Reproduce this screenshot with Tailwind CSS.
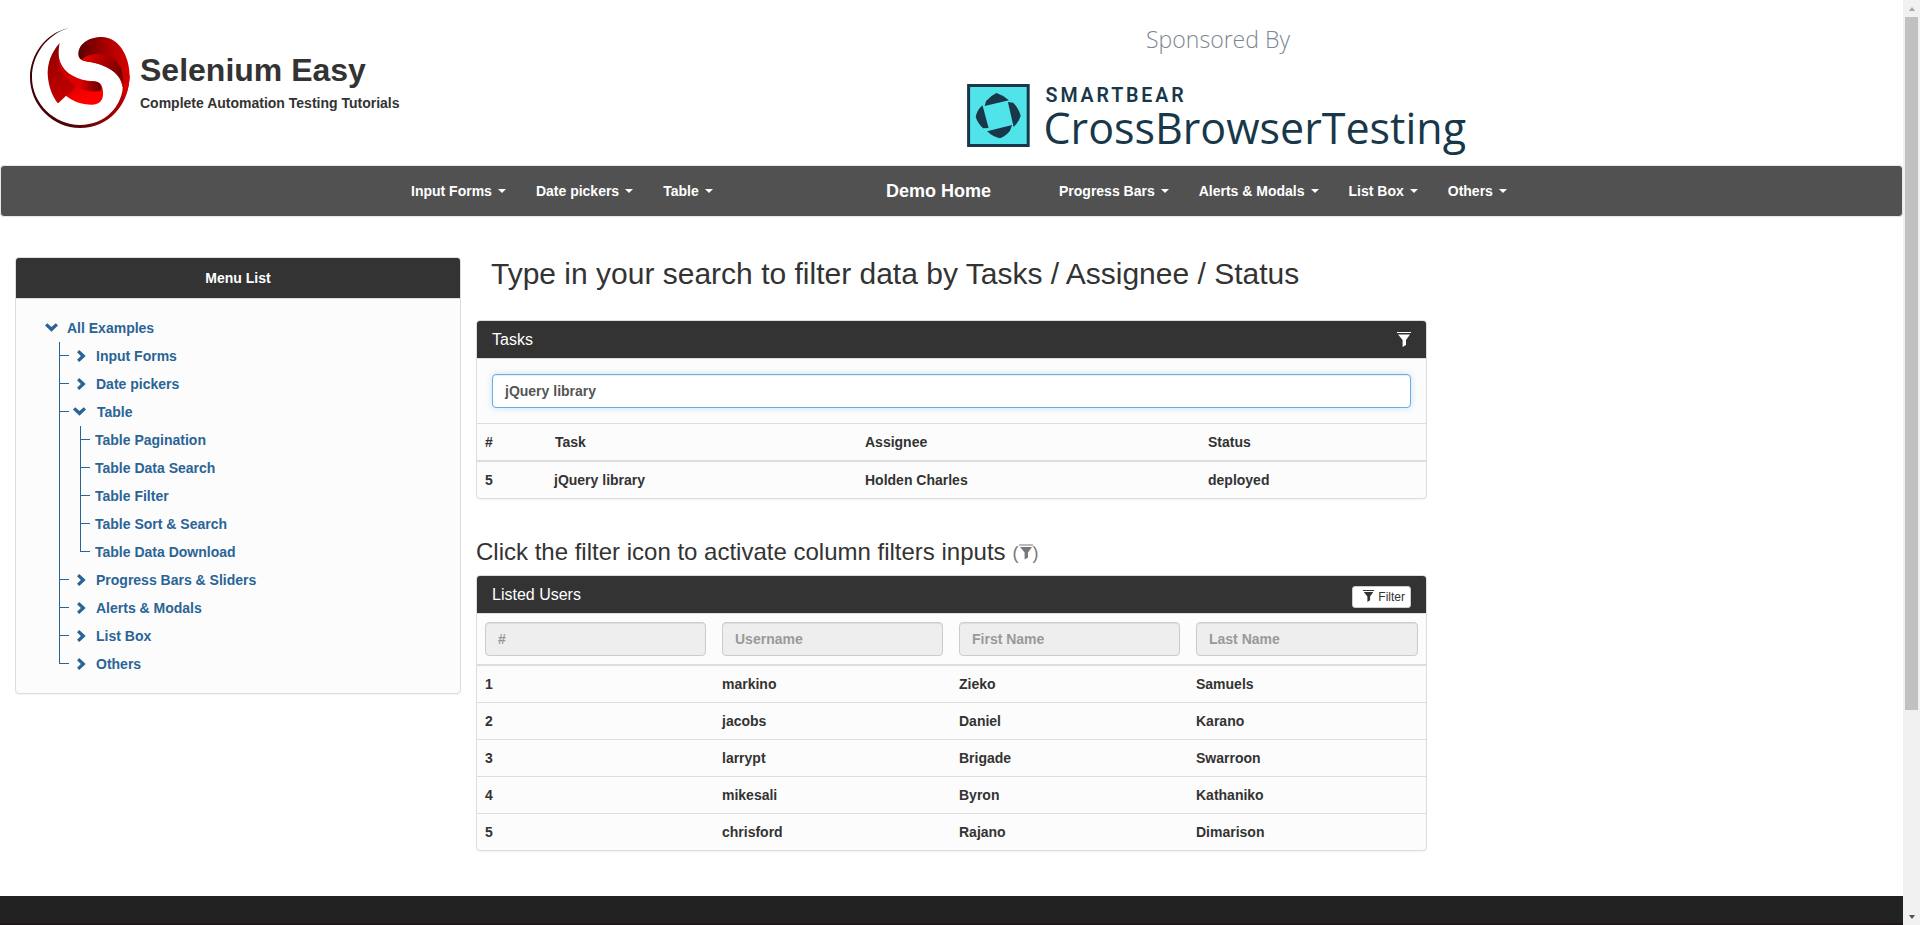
<!DOCTYPE html>
<html lang="en">
<head>
<meta charset="utf-8">
<title>Selenium Easy - Table Data Search</title>
<script src="https://cdn.jsdelivr.net/npm/@tailwindcss/browser@4"></script>
</head>
<body class="h-[925px] overflow-hidden bg-white font-['Liberation_Sans',Arial,sans-serif] text-sm leading-5 font-bold text-[#333]">
<svg class="hidden">
  <symbol id="filter" viewBox="0 0 14 15"><path d="M0 0H14V1H0zM1 2.4H13L9 8V13L5.6 15V8z" fill="currentColor"/></symbol>
  <symbol id="right" viewBox="0 0 9 12"><path d="M0 2.2 2.2 0 8.7 6 2.2 12 0 9.8 3.9 6z" fill="currentColor"/></symbol>
  <symbol id="down" viewBox="0 0 13 9"><path d="M0 2.4 2.2 .2 6.5 4 10.8 .2 13 2.4 6.5 8.7z" fill="currentColor"/></symbol>
</svg>
<div class="flex h-full">
<div class="flex h-full w-[1903px] flex-col">
  <header class="flex h-[165px] shrink-0">
    <div class="flex w-[967px] pt-7 pl-[30px]">
      <svg class="size-[100px] shrink-0" viewBox="90 84 300 300">
        <defs>
          <linearGradient id="g1" x1="0" x2="1"><stop offset="0" stop-color="#5a0000"/><stop offset=".6" stop-color="#b00000"/><stop offset="1" stop-color="#d80000"/></linearGradient>
          <linearGradient id="g2" x1="0" y1="0" x2="1" y2=".3"><stop offset="0" stop-color="#f00000"/><stop offset="1" stop-color="#7a0000"/></linearGradient>
          <linearGradient id="g3" x1="0" y1="0" x2=".5" y2="1"><stop offset="0" stop-color="#7a0000"/><stop offset="1" stop-color="#ff0000"/></linearGradient>
          <linearGradient id="g4" x1="0" x2="1"><stop offset="0" stop-color="#400006"/><stop offset=".5" stop-color="#5a0408"/><stop offset="1" stop-color="#c00000"/></linearGradient>
          <linearGradient id="g5" x1="0" x2="1"><stop offset="0" stop-color="#d00000"/><stop offset=".5" stop-color="#e00000"/><stop offset="1" stop-color="#600000"/></linearGradient>
        </defs>
        <path d="M206 84C135 100 90 165 90 232C90 316 158 384 240 384C325 384 389 315 389 225L370 250C368 320 315 375 240 375C164 375 96 312 96 232C96 165 140 104 206 84Z" fill="url(#g4)"/>
        <path d="M235 162C236 130 268 111 305 111C358 112 390 170 389 232C386 262 380 285 368 300C372 262 366 240 345 218C325 200 290 187 258 184C243 181 235 175 235 162Z" fill="url(#g1)"/>
        <path d="M244 180C260 160 300 155 335 172C358 186 370 208 370 252C360 222 320 192 262 185Z" fill="url(#g2)"/>
        <path d="M179 129C152 160 143 190 143 222C145 260 156 287 174 310L198 287C215 302 245 314 275 314C300 313 311 300 309 275C308 252 297 244 280 244C235 241 194 222 180 185C174 165 176 145 179 129Z" fill="url(#g3)"/>
        <path d="M176 170C184 225 225 242 280 244C300 245 307 260 303 272C280 278 245 272 225 258C195 240 172 215 176 170Z" fill="url(#g5)"/>
        <path d="M144 215C146 255 158 290 174 310L198 287C215 278 222 268 224 258C195 235 180 215 172 175Z" fill="#a00000" opacity=".55"/>
      </svg>
      <div class="pl-[10px] pt-6">
        <h1 class="text-[32px] leading-9">Selenium Easy</h1>
        <p class="pt-[5px]">Complete Automation Testing Tutorials</p>
      </div>
    </div>
    <svg class="mt-5 h-[140px] w-[505px] overflow-visible font-normal" viewBox="27 20 505 140" font-family="Open Sans, sans-serif">
      <text x="206" y="48" font-size="24" font-weight="300" fill="#7b8794" textLength="144" lengthAdjust="spacingAndGlyphs">Sponsored By</text>
      <rect x="28.6" y="85.5" width="59.6" height="60" fill="#50e3ea" stroke="#18384a" stroke-width="3"/>
      <path d="M44.6 106 46.1 101Q51 95.5 56.4 93Q63 95 68.9 100.3zM67.9 102 73.2 102.7Q78.5 108 80.7 115.7Q79 122 73.6 127zM47.1 131.3 72.1 125 70 130.7Q66 136 60 138.3Q53 137 47.1 131.3zM42.5 105.3 48.6 128 43.2 128.3Q38 124 35.7 117Q37 110 42.5 105.3z" fill="#18384a"/>
      <text x="105.6" y="102" font-size="19.6" font-weight="600" fill="#18384a" textLength="138" lengthAdjust="spacing" font-family="Roboto, sans-serif">SMARTBEAR</text>
      <text x="103.5" y="144" font-size="44" fill="#18384a" textLength="422.5" lengthAdjust="spacingAndGlyphs">CrossBrowserTesting</text>
    </svg>
  </header>

  <nav class="flex h-[52px] shrink-0 items-center rounded border border-[#e7e7e7] bg-[#515151] pb-px text-white">
    <div class="flex w-[885px] pl-[395px]">
      <a class="flex items-center px-[15px]">Input Forms<i class="ml-[6px] border-x-4 border-t-4 border-x-transparent border-t-white"></i></a>
      <a class="flex items-center px-[15px]">Date pickers<i class="ml-[6px] border-x-4 border-t-4 border-x-transparent border-t-white"></i></a>
      <a class="flex items-center px-[15px]">Table<i class="ml-[6px] border-x-4 border-t-4 border-x-transparent border-t-white"></i></a>
    </div>
    <a class="w-[158px] text-lg leading-5">Demo Home</a>
    <div class="flex">
      <a class="flex items-center px-[15px]">Progress Bars<i class="ml-[6px] border-x-4 border-t-4 border-x-transparent border-t-white"></i></a>
      <a class="flex items-center px-[15px]">Alerts &amp; Modals<i class="ml-[6px] border-x-4 border-t-4 border-x-transparent border-t-white"></i></a>
      <a class="flex items-center px-[15px]">List Box<i class="ml-[6px] border-x-4 border-t-4 border-x-transparent border-t-white"></i></a>
      <a class="flex items-center px-[15px]">Others<i class="ml-[6px] border-x-4 border-t-4 border-x-transparent border-t-white"></i></a>
    </div>
  </nav>

  <main class="flex flex-1 items-start pl-[15px]">
    <aside class="mt-10 h-[437px] w-[446px] rounded border border-[#ddd] bg-[#fcfcfc] shadow-[0_1px_1px_rgba(0,0,0,.05)]">
      <div class="flex h-[41px] items-center justify-center rounded-t-[3px] border-b border-[#ddd] bg-[#333] text-white">Menu List</div>
      <div class="pt-[15px] pl-[29px] text-[#2a6496]">
        <div class="flex h-7 items-center"><svg class="mb-0.5 mr-[9px] h-[9px] w-[13px]"><use href="#down"/></svg>All Examples</div>
        <ul class="pl-[14px]">
          <li class="flex"><span class="mr-[8px] h-7 w-[10px] border-l border-[#2a6496]"><i class="mt-[13px] block h-px bg-[#2a6496]"></i></span><span class="flex h-7 items-center"><svg class="mr-[10px] h-3 w-[9px]"><use href="#right"/></svg>Input Forms</span></li>
          <li class="flex"><span class="mr-[8px] h-7 w-[10px] border-l border-[#2a6496]"><i class="mt-[13px] block h-px bg-[#2a6496]"></i></span><span class="flex h-7 items-center"><svg class="mr-[10px] h-3 w-[9px]"><use href="#right"/></svg>Date pickers</span></li>
          <li>
            <div class="flex"><span class="mr-[4px] h-7 w-[10px] border-l border-[#2a6496]"><i class="mt-[13px] block h-px bg-[#2a6496]"></i></span><span class="flex h-7 items-center"><svg class="mb-0.5 mr-[11px] h-[9px] w-[13px]"><use href="#down"/></svg>Table</span></div>
            <ul class="border-l border-[#2a6496] pl-[20px]">
              <li class="flex"><span class="mr-[5px] h-7 w-[10px] border-l border-[#2a6496]"><i class="mt-[13px] block h-px bg-[#2a6496]"></i></span><span class="flex h-7 items-center">Table Pagination</span></li>
              <li class="flex"><span class="mr-[5px] h-7 w-[10px] border-l border-[#2a6496]"><i class="mt-[13px] block h-px bg-[#2a6496]"></i></span><span class="flex h-7 items-center">Table Data Search</span></li>
              <li class="flex"><span class="mr-[5px] h-7 w-[10px] border-l border-[#2a6496]"><i class="mt-[13px] block h-px bg-[#2a6496]"></i></span><span class="flex h-7 items-center">Table Filter</span></li>
              <li class="flex"><span class="mr-[5px] h-7 w-[10px] border-l border-[#2a6496]"><i class="mt-[13px] block h-px bg-[#2a6496]"></i></span><span class="flex h-7 items-center">Table Sort &amp; Search</span></li>
              <li class="flex"><span class="mr-[5px] h-[14px] w-[10px] border-b border-l border-[#2a6496]"></span><span class="flex h-7 items-center">Table Data Download</span></li>
            </ul>
          </li>
          <li class="flex"><span class="mr-[8px] h-7 w-[10px] border-l border-[#2a6496]"><i class="mt-[13px] block h-px bg-[#2a6496]"></i></span><span class="flex h-7 items-center"><svg class="mr-[10px] h-3 w-[9px]"><use href="#right"/></svg>Progress Bars &amp; Sliders</span></li>
          <li class="flex"><span class="mr-[8px] h-7 w-[10px] border-l border-[#2a6496]"><i class="mt-[13px] block h-px bg-[#2a6496]"></i></span><span class="flex h-7 items-center"><svg class="mr-[10px] h-3 w-[9px]"><use href="#right"/></svg>Alerts &amp; Modals</span></li>
          <li class="flex"><span class="mr-[8px] h-7 w-[10px] border-l border-[#2a6496]"><i class="mt-[13px] block h-px bg-[#2a6496]"></i></span><span class="flex h-7 items-center"><svg class="mr-[10px] h-3 w-[9px]"><use href="#right"/></svg>List Box</span></li>
          <li class="flex"><span class="mr-[8px] h-[14px] w-[10px] border-b border-l border-[#2a6496]"></span><span class="flex h-7 items-center"><svg class="mr-[10px] h-3 w-[9px]"><use href="#right"/></svg>Others</span></li>
        </ul>
      </div>
    </aside>

    <div class="ml-[15px] w-[951px]">
      <h2 class="mt-10 h-[63px] pl-[15px] text-[30px] leading-[33px] font-normal">Type in your search to filter data by Tasks / Assignee / Status</h2>
      <section class="rounded border border-[#ddd] bg-[#fcfcfc] shadow-[0_1px_1px_rgba(0,0,0,.05)]">
        <div class="flex h-[38px] items-center justify-between rounded-t-[3px] border-b border-[#ddd] bg-[#333] px-[15px] text-base leading-[18px] font-normal text-white">Tasks<svg class="h-[15px] w-[14px]"><use href="#filter"/></svg></div>
        <div class="p-[15px]"><div class="flex h-[34px] items-center rounded border border-[#66afe9] bg-white px-3 text-[#555] shadow-[inset_0_1px_1px_rgba(0,0,0,.075),0_0_6px_rgba(102,175,233,.35)]">jQuery library</div></div>
        <div class="grid h-[39px] grid-cols-[70px_310px_343px_auto] items-center border-t border-b-2 border-[#ddd] pl-2"><span>#</span><span>Task</span><span>Assignee</span><span>Status</span></div>
        <div class="grid h-9 grid-cols-[69px_311px_343px_auto] items-center pl-2"><span>5</span><span>jQuery library</span><span>Holden Charles</span><span>deployed</span></div>
      </section>
      <h3 class="flex h-[76px] items-center pt-[30px] text-2xl leading-[26px] font-normal">Click the filter icon to activate column filters inputs<span class="ml-[7px] flex items-center pt-[2px] text-lg text-[#777]">(<svg class="mb-[3px] h-[16px] w-[14px]"><use href="#filter"/></svg>)</span></h3>
      <section class="rounded border border-[#ddd] bg-[#fcfcfc] shadow-[0_1px_1px_rgba(0,0,0,.05)]">
        <div class="flex h-[38px] items-center justify-between rounded-t-[3px] border-b border-[#ddd] bg-[#333] px-[15px] text-base leading-[18px] font-normal text-white">Listed Users
          <span class="mt-[5px] flex h-[22px] w-[59px] items-center justify-end rounded-[3px] border border-[#ccc] bg-white pr-[5px] text-xs text-[#333]"><svg class="mr-[4px] mb-[2px] h-[12px] w-[11px]"><use href="#filter"/></svg>Filter</span></div>
        <div class="grid h-[52px] grid-cols-[237px_237px_237px_auto] items-center border-b-2 border-[#ddd] text-[#999]">
          <div class="px-2"><div class="flex h-[34px] items-center rounded border border-[#ccc] bg-[#eee] px-3 shadow-[inset_0_1px_1px_rgba(0,0,0,.075)]">#</div></div>
          <div class="px-2"><div class="flex h-[34px] items-center rounded border border-[#ccc] bg-[#eee] px-3 shadow-[inset_0_1px_1px_rgba(0,0,0,.075)]">Username</div></div>
          <div class="px-2"><div class="flex h-[34px] items-center rounded border border-[#ccc] bg-[#eee] px-3 shadow-[inset_0_1px_1px_rgba(0,0,0,.075)]">First Name</div></div>
          <div class="px-2"><div class="flex h-[34px] items-center rounded border border-[#ccc] bg-[#eee] px-3 shadow-[inset_0_1px_1px_rgba(0,0,0,.075)]">Last Name</div></div>
        </div>
        <div class="grid h-[37px] grid-cols-[237px_237px_237px_auto] items-center border-b border-[#ddd] *:px-2"><span>1</span><span>markino</span><span>Zieko</span><span>Samuels</span></div>
        <div class="grid h-[37px] grid-cols-[237px_237px_237px_auto] items-center border-b border-[#ddd] *:px-2"><span>2</span><span>jacobs</span><span>Daniel</span><span>Karano</span></div>
        <div class="grid h-[37px] grid-cols-[237px_237px_237px_auto] items-center border-b border-[#ddd] *:px-2"><span>3</span><span>larrypt</span><span>Brigade</span><span>Swarroon</span></div>
        <div class="grid h-[37px] grid-cols-[237px_237px_237px_auto] items-center border-b border-[#ddd] *:px-2"><span>4</span><span>mikesali</span><span>Byron</span><span>Kathaniko</span></div>
        <div class="grid h-9 grid-cols-[237px_237px_237px_auto] items-center *:px-2"><span>5</span><span>chrisford</span><span>Rajano</span><span>Dimarison</span></div>
      </section>
    </div>
  </main>
  <footer class="h-[29px] shrink-0 border-b-2 border-[#1c1819] bg-[#222]"></footer>
</div>
<div class="flex h-full w-[17px] flex-col items-center bg-[#f1f1f1]">
  <div class="flex h-[17px] shrink-0 items-center"><i class="border-x-[3.5px] border-b-4 border-x-transparent border-b-[#a3a3a3]"></i></div>
  <div class="h-[693px] w-[13px] shrink-0 bg-[#c1c1c1]"></div>
  <div class="mt-auto flex h-[17px] shrink-0 items-center"><i class="border-x-[3.5px] border-t-4 border-x-transparent border-t-[#505050]"></i></div>
</div>
</div>
</body>
</html>
